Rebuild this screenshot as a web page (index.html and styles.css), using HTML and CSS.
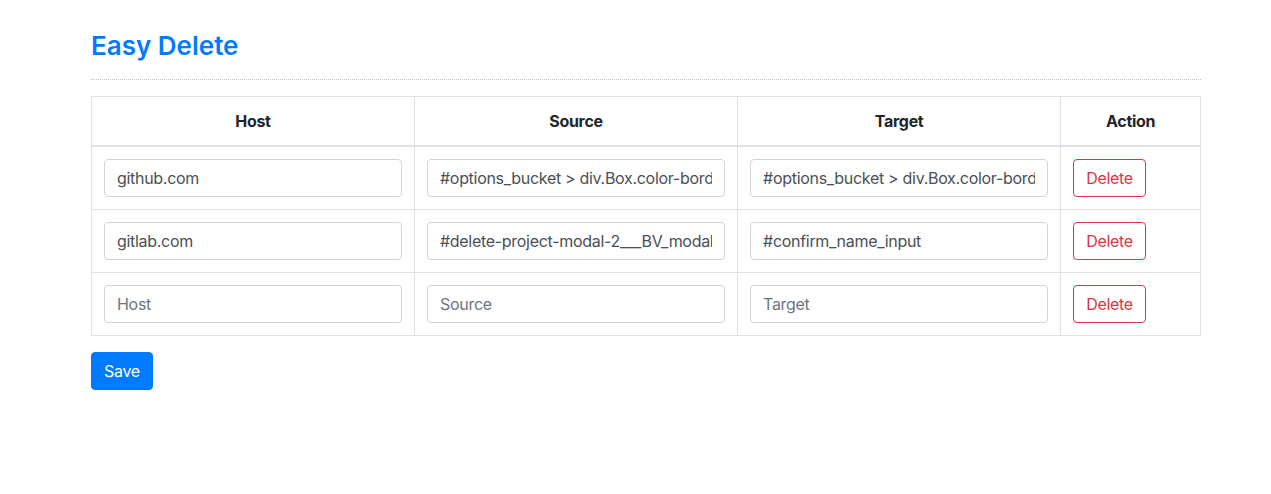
FILE: index.html
```html
<!DOCTYPE html>
<html lang="en">
<head>
<meta charset="utf-8">
<title>Easy Delete</title>
<link rel="stylesheet" href="styles.css">
</head>
<body>
<div class="container">
  <h2 class="title">Easy Delete</h2>
  <table class="rules">
    <thead>
      <tr>
        <th class="col-main">Host</th>
        <th class="col-main">Source</th>
        <th class="col-main">Target</th>
        <th class="col-action">Action</th>
      </tr>
    </thead>
    <tbody>
      <tr>
        <td><input class="field" type="text" value="github.com" placeholder="Host"></td>
        <td><input class="field" type="text" value="#options_bucket > div.Box.color-border-danger" placeholder="Source"></td>
        <td><input class="field" type="text" value="#options_bucket > div.Box.color-border-danger" placeholder="Target"></td>
        <td><button class="btn btn-danger-outline" type="button">Delete</button></td>
      </tr>
      <tr>
        <td><input class="field" type="text" value="gitlab.com" placeholder="Host"></td>
        <td><input class="field" type="text" value="#delete-project-modal-2___BV_modal_footer_ > button" placeholder="Source"></td>
        <td><input class="field" type="text" value="#confirm_name_input" placeholder="Target"></td>
        <td><button class="btn btn-danger-outline" type="button">Delete</button></td>
      </tr>
      <tr>
        <td><input class="field" type="text" value="" placeholder="Host"></td>
        <td><input class="field" type="text" value="" placeholder="Source"></td>
        <td><input class="field" type="text" value="" placeholder="Target"></td>
        <td><button class="btn btn-danger-outline" type="button">Delete</button></td>
      </tr>
    </tbody>
  </table>
  <button class="btn btn-primary" type="button">Save</button>
</div>
</body>
</html>
```
FILE: styles.css
```css
html, body {
  margin: 0;
  padding: 0;
  background: #fff;
}
body {
  font-family: Inter, "Noto Sans", "Liberation Sans", sans-serif;
  font-size: 16px;
  line-height: 1.5;
  color: #212529;
  letter-spacing: -0.3px;
}
.container {
  width: 1110px;
  margin-left: 91px;
  padding-top: 30px;
}
.title {
  margin: 0 0 16px 0;
  padding-bottom: 18px;
  font-size: 26px;
  font-weight: 600;
  line-height: 1.2;
  letter-spacing: 0;
  color: #007bff;
  border-bottom: 1px dotted #c4c4c4;
}
.rules {
  width: 1110px;
  border-collapse: collapse;
  margin-bottom: 16px;
}
.rules th,
.rules td {
  border: 1px solid #dee2e6;
  padding: 12px;
  vertical-align: top;
}
.rules th {
  font-weight: 700;
  text-align: center;
  border-bottom: 2px solid #dee2e6;
  height: 24px;
}
.col-main { width: 299px; }
.col-action { width: 115px; }
.field {
  display: block;
  box-sizing: border-box;
  width: 100%;
  height: 38px;
  padding: 6px 12px;
  font: inherit;
  letter-spacing: inherit;
  color: #495057;
  background: #fff;
  border: 1px solid #ced4da;
  border-radius: 4px;
  outline: none;
}
.field::placeholder {
  color: #6c757d;
  opacity: 1;
}
.btn {
  display: inline-block;
  box-sizing: border-box;
  height: 38px;
  padding: 6px 12px;
  font: inherit;
  letter-spacing: inherit;
  line-height: 1.5;
  border-radius: 4px;
  cursor: pointer;
}
.btn-danger-outline {
  color: #dc3545;
  background: transparent;
  border: 1px solid #dc3545;
}
.btn-primary {
  color: #fff;
  background: #007bff;
  border: 1px solid #007bff;
}
```
